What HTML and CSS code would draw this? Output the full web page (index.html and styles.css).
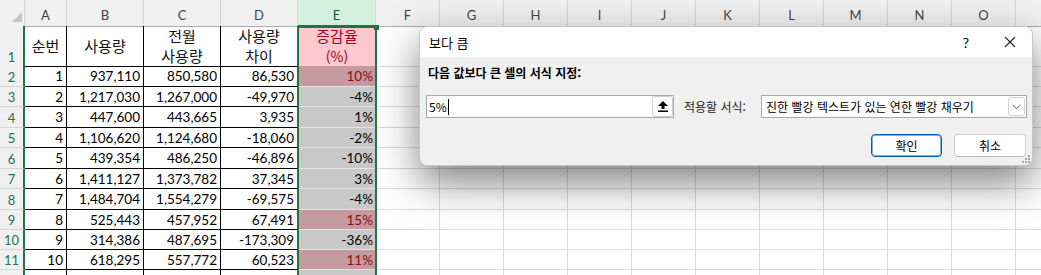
FILE: index.html
```html
<!DOCTYPE html>
<html lang="ko">
<head>
  <meta charset="UTF-8">
  <title>보다 큼</title>
  <link rel="stylesheet" href="styles.css">
</head>
<body>
  <div class="sheet">
    <div class="hdr">
      <div class="corner">
        <svg width="25" height="26" viewBox="0 0 25 26"><polygon points="22,12 22,22 12,22" fill="#c4c4c4"/></svg>
      </div>
      <div class="ch">A</div>
      <div class="ch">B</div>
      <div class="ch">C</div>
      <div class="ch">D</div>
      <div class="ch on">E</div>
      <div class="ch">F</div>
      <div class="ch">G</div>
      <div class="ch">H</div>
      <div class="ch">I</div>
      <div class="ch">J</div>
      <div class="ch">K</div>
      <div class="ch">L</div>
      <div class="ch">M</div>
      <div class="ch">N</div>
      <div class="ch">O</div>
      <div class="ch"></div>
    </div>

    <div class="row h40">
      <div class="rh">1</div>
      <div class="c t"><span>순번</span></div>
      <div class="c t"><span>사용량</span></div>
      <div class="c t"><span>전월<br>사용량</span></div>
      <div class="c t"><span>사용량<br>차이</span></div>
      <div class="c t e1"><span>증감율<br><span class="pc">(%)</span></span></div>
      <div class="rest"></div>
    </div>
    <div class="row h21">
      <div class="rh">2</div>
      <div class="c">1</div><div class="c">937,110</div><div class="c">850,580</div><div class="c">86,530</div>
      <div class="c e hi">10%</div>
      <div class="rest"></div>
    </div>
    <div class="row h20">
      <div class="rh">3</div>
      <div class="c">2</div><div class="c">1,217,030</div><div class="c">1,267,000</div><div class="c">-49,970</div>
      <div class="c e">-4%</div>
      <div class="rest"></div>
    </div>
    <div class="row h21">
      <div class="rh">4</div>
      <div class="c">3</div><div class="c">447,600</div><div class="c">443,665</div><div class="c">3,935</div>
      <div class="c e">1%</div>
      <div class="rest"></div>
    </div>
    <div class="row h20">
      <div class="rh">5</div>
      <div class="c">4</div><div class="c">1,106,620</div><div class="c">1,124,680</div><div class="c">-18,060</div>
      <div class="c e">-2%</div>
      <div class="rest"></div>
    </div>
    <div class="row h21">
      <div class="rh">6</div>
      <div class="c">5</div><div class="c">439,354</div><div class="c">486,250</div><div class="c">-46,896</div>
      <div class="c e">-10%</div>
      <div class="rest"></div>
    </div>
    <div class="row h20">
      <div class="rh">7</div>
      <div class="c">6</div><div class="c">1,411,127</div><div class="c">1,373,782</div><div class="c">37,345</div>
      <div class="c e">3%</div>
      <div class="rest"></div>
    </div>
    <div class="row h21">
      <div class="rh">8</div>
      <div class="c">7</div><div class="c">1,484,704</div><div class="c">1,554,279</div><div class="c">-69,575</div>
      <div class="c e">-4%</div>
      <div class="rest"></div>
    </div>
    <div class="row h20">
      <div class="rh">9</div>
      <div class="c">8</div><div class="c">525,443</div><div class="c">457,952</div><div class="c">67,491</div>
      <div class="c e hi">15%</div>
      <div class="rest"></div>
    </div>
    <div class="row h20">
      <div class="rh">10</div>
      <div class="c">9</div><div class="c">314,386</div><div class="c">487,695</div><div class="c">-173,309</div>
      <div class="c e">-36%</div>
      <div class="rest"></div>
    </div>
    <div class="row h20">
      <div class="rh">11</div>
      <div class="c">10</div><div class="c">618,295</div><div class="c">557,772</div><div class="c">60,523</div>
      <div class="c e hi">11%</div>
      <div class="rest"></div>
    </div>
    <div class="row h20">
      <div class="rh"></div>
      <div class="c"></div><div class="c"></div><div class="c"></div><div class="c"></div>
      <div class="c e"></div>
      <div class="rest"></div>
    </div>

    <!-- selection over column E -->
    <div class="sel"><div class="handle"></div></div>

    <div class="dlg">
      <div class="dlg-title">
        <span>보다 큼</span>
        <span class="help">?</span>
        <svg class="x" width="12" height="12" viewBox="0 0 12 12"><path d="M1 1 L11 11 M11 1 L1 11" stroke="#222" stroke-width="1.1"/></svg>
      </div>
      <div class="dlg-body">
        <div class="dlg-label">다음 값보다 큰 셀의 서식 지정:</div>
        <div class="dlg-row">
          <div class="field">
            <span>5%</span><span class="caret"></span>
            <div class="pick">
              <svg width="10" height="11" viewBox="0 0 10 11"><polygon points="5,0 10,5 6.5,5 6.5,8 3.5,8 3.5,5 0,5" fill="#000"/><rect x="0" y="9.5" width="10" height="1.5" fill="#000"/></svg>
            </div>
          </div>
          <span class="apply">적용할 서식:</span>
          <div class="combo">
            <span>진한 빨강 텍스트가 있는 연한 빨강 채우기</span>
            <div class="drop">
              <svg width="9" height="6" viewBox="0 0 9 6"><path d="M0.5 0.8 L4.5 4.8 L8.5 0.8" fill="none" stroke="#555" stroke-width="1"/></svg>
            </div>
          </div>
        </div>
        <div class="dlg-btns">
          <button class="btn primary">확인</button>
          <button class="btn">취소</button>
        </div>
      </div>
      <svg class="grip" width="8" height="8" viewBox="0 0 8 8">
        <rect x="6" y="0" width="2" height="2" fill="#a8a8a8"/>
        <rect x="3" y="3" width="2" height="2" fill="#a8a8a8"/>
        <rect x="6" y="3" width="2" height="2" fill="#a8a8a8"/>
        <rect x="0" y="6" width="2" height="2" fill="#a8a8a8"/>
        <rect x="3" y="6" width="2" height="2" fill="#a8a8a8"/>
        <rect x="6" y="6" width="2" height="2" fill="#a8a8a8"/>
      </svg>
    </div>
  </div>
</body>
</html>
```

FILE: styles.css
```css
body {
  margin: 0;
  background: #fff;
  font-family: Lato, "Noto Sans CJK KR", sans-serif;
  overflow: hidden;
}
.sheet {
  position: relative;
  width: 1041px;
  height: 275px;
  overflow: hidden;
}

/* column headers */
.hdr {
  display: grid;
  grid-template-columns: 25px 42px 77px 77px 77px 78px repeat(11, 64px);
  height: 26px;
}
.corner, .ch {
  box-sizing: border-box;
  background: #f0f0f0;
  border-right: 1px solid #d6d6d6;
  border-bottom: 1px solid #ababab;
}
.corner svg {
  display: block;
}
.ch {
  display: flex;
  align-items: flex-end;
  justify-content: center;
  padding-bottom: 3px;
  font-size: 13px;
  color: #444;
}
.ch.on {
  background: #d3f0e0;
  color: #0f5c33;
  border-bottom: 2px solid #217346;
  padding-bottom: 2px;
}

/* rows */
.row {
  display: grid;
  grid-template-columns: 25px 42px 77px 77px 77px 78px 1fr;
}
.h40 { height: 40px; }
.h21 { height: 21px; }
.h20 { height: 20px; }
.rh {
  box-sizing: border-box;
  background: #f0f0f0;
  border-right: 2px solid #217346;
  border-bottom: 1px solid #d6d6d6;
  display: flex;
  align-items: flex-end;
  justify-content: center;
  padding-bottom: 1px;
  font-size: 13px;
  color: #217346;
}
.c {
  box-sizing: border-box;
  border-right: 1px solid #000;
  border-bottom: 1px solid #000;
  display: flex;
  align-items: center;
  justify-content: flex-end;
  padding-right: 3px;
  font-size: 13.5px;
  color: #000;
}
.t {
  justify-content: center;
  padding-right: 0;
  text-align: center;
  font-family: "Noto Sans CJK KR", sans-serif;
  font-size: 15px;
  line-height: 20px;
  color: #111;
}
.e1 {
  background: #ffc7ce;
  color: #a00222;
  border-right: none;
}
.e1 .pc {
  font-size: 14px;
}
.e {
  background: #c8c8c8;
  border-right: none;
  border-bottom: 1px solid #e4e4e4;
}
.e.hi {
  background: #c49a9e;
  color: #8a0a12;
}
.rest {
  box-sizing: border-box;
  border-bottom: 1px solid #dadada;
  background: repeating-linear-gradient(to right, transparent 0 63px, #dadada 63px 64px);
}

/* selection box */
.sel {
  position: absolute;
  left: 297px;
  top: 26px;
  width: 80px;
  height: 270px;
  box-sizing: border-box;
  border: 2px solid #217346;
}
.handle {
  position: absolute;
  right: -4px;
  top: -3px;
  width: 5px;
  height: 5px;
  background: #217346;
}

/* dialog */
.dlg {
  position: absolute;
  left: 419px;
  top: 26px;
  width: 614px;
  height: 140px;
  box-sizing: border-box;
  border: 1px solid #c6c6c6;
  border-radius: 8px;
  background: #f0f0f0;
  box-shadow: 0 16px 40px rgba(0,0,0,0.5);
  font-family: "Noto Sans CJK KR", sans-serif;
  font-size: 12px;
  color: #000;
  overflow: hidden;
}
.dlg-title {
  height: 30px;
  background: #fff;
  display: flex;
  align-items: center;
  padding-left: 9px;
  font-size: 13px;
}
.help {
  margin-left: auto;
  width: 14px;
  text-align: center;
  font-family: Lato, sans-serif;
  font-size: 14px;
}
.x {
  margin: 0 16px 0 31px;
}
.dlg-body {
  padding: 7px 5px 0 6px;
}
.dlg-label {
  margin-left: 2px;
  font-weight: bold;
  line-height: 17px;
}
.dlg-row {
  display: flex;
  align-items: center;
  margin-top: 14px;
  height: 23px;
}
.field {
  box-sizing: border-box;
  width: 248px;
  height: 23px;
  background: #fff;
  border: 1px solid #a9a9a9;
  display: flex;
  align-items: center;
  padding-left: 2px;
}
.caret {
  width: 1px;
  height: 16px;
  background: #000;
  margin-left: 1px;
}
.pick {
  margin-left: auto;
  box-sizing: border-box;
  width: 21px;
  height: 21px;
  border: 1px solid #cfcfcf;
  border-radius: 3px;
  background: #fff;
  display: flex;
  align-items: center;
  justify-content: center;
}
.apply {
  flex: 1;
  margin-left: 10px;
  color: #222;
}
.combo {
  box-sizing: border-box;
  width: 266px;
  height: 23px;
  background: #fff;
  border: 1px solid #a9a9a9;
  display: flex;
  align-items: center;
  padding-left: 4px;
}
.drop {
  margin-left: auto;
  margin-right: 1px;
  box-sizing: border-box;
  width: 17px;
  height: 19px;
  border: 1px solid #d0d0d0;
  border-radius: 3px;
  display: flex;
  align-items: center;
  justify-content: center;
}
.dlg-btns {
  display: flex;
  justify-content: flex-end;
  gap: 12px;
  margin-top: 16px;
  margin-right: 1px;
}
.btn {
  box-sizing: border-box;
  width: 72px;
  height: 23px;
  background: #fff;
  border: 1px solid #d0d0d0;
  border-bottom-color: #b8b8b8;
  border-radius: 4px;
  font-family: "Noto Sans CJK KR", sans-serif;
  font-size: 12px;
  color: #000;
  padding: 0;
}
.btn.primary {
  width: 71px;
  border: 1px solid #005fb8;
  box-shadow: inset 0 0 0 1px rgba(0,95,184,0.5);
}
.grip {
  position: absolute;
  right: 2px;
  bottom: 2px;
}
```
